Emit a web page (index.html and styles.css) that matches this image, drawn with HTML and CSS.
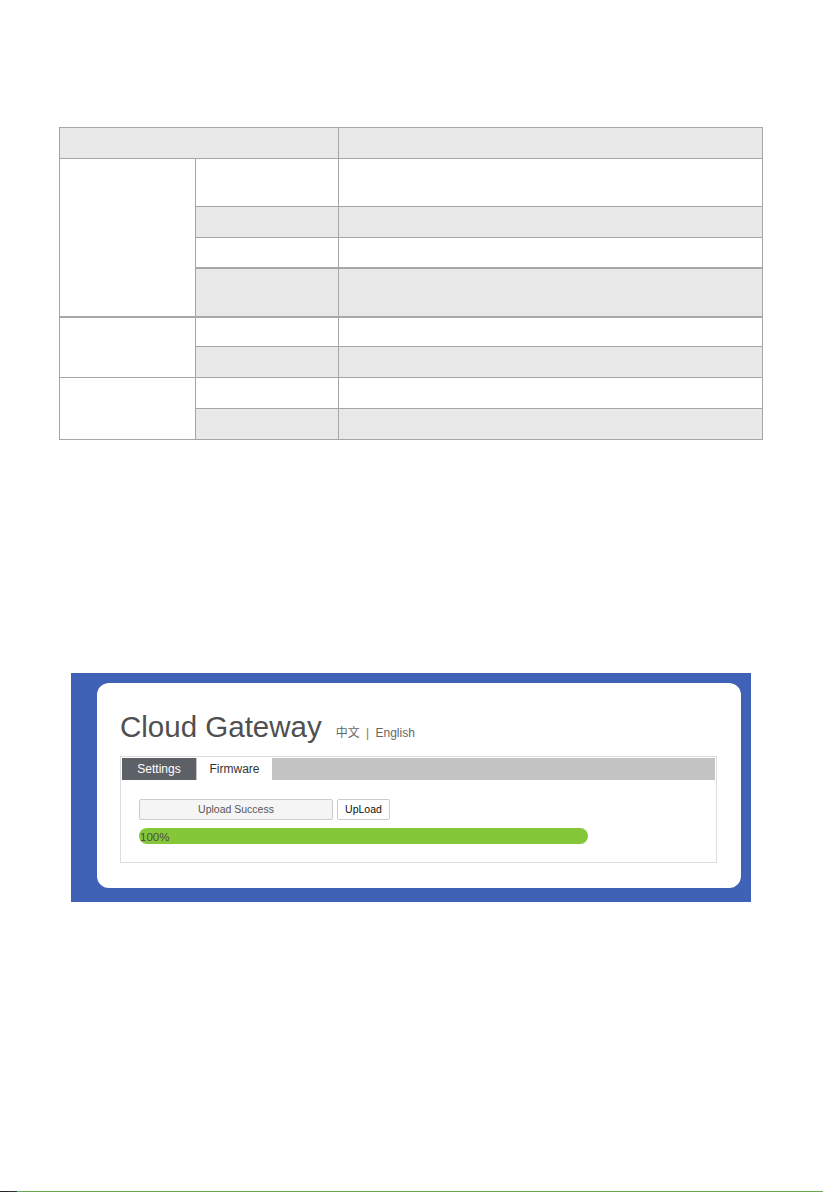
FILE: index.html
```html
<!DOCTYPE html>
<html lang="en">
<head>
    <meta charset="UTF-8">
    <meta name="viewport" content="width=device-width, initial-scale=1.0">
    <title>Cloud Gateway manual page</title>
    <link rel="stylesheet" href="styles.css">
</head>
<body>
    <div class="page">
        <!-- Parameter table (cells left blank) -->
        <table class="spec-table">
            <colgroup>
                <col class="col-group">
                <col class="col-item">
                <col class="col-desc">
            </colgroup>
            <tr class="row-head h31">
                <td colspan="2"></td>
                <td></td>
            </tr>
            <tr class="h48">
                <td class="group" rowspan="4"></td>
                <td></td>
                <td></td>
            </tr>
            <tr class="shade h31">
                <td></td>
                <td></td>
            </tr>
            <tr class="h30">
                <td></td>
                <td></td>
            </tr>
            <tr class="shade h49 thick">
                <td></td>
                <td></td>
            </tr>
            <tr class="h30 thick">
                <td class="group" rowspan="2"></td>
                <td></td>
                <td></td>
            </tr>
            <tr class="shade h31">
                <td></td>
                <td></td>
            </tr>
            <tr class="h31">
                <td class="group" rowspan="2"></td>
                <td></td>
                <td></td>
            </tr>
            <tr class="shade h31">
                <td></td>
                <td></td>
            </tr>
        </table>

        <!-- Screenshot of the gateway web UI -->
        <div class="shot">
            <div class="card">
                <div class="title-row">
                    <h1 class="title">Cloud Gateway</h1>
                    <span class="lang">中文 <span class="sep">|</span> English</span>
                </div>

                <div class="tab-box">
                    <div class="tab-bar">
                        <span class="tab tab-dark">Settings</span>
                        <span class="tab tab-active">Firmware</span>
                    </div>
                    <div class="tab-body">
                        <div class="upload-row">
                            <div class="file-field">Upload Success</div>
                            <button class="upload-btn">UpLoad</button>
                        </div>
                        <div class="progress">
                            <span class="progress-label">100%</span>
                        </div>
                    </div>
                </div>
            </div>
        </div>
    </div>
    <div class="page-edge"></div>
</body>
</html>
```

FILE: styles.css
```css
html, body {
    margin: 0;
    padding: 0;
    background: #fff;
    font-family: "Liberation Sans", Arial, "Noto Sans CJK SC", sans-serif;
    color: #333;
}
.page {
    height: 1191px;
    padding-top: 127px;
    box-sizing: border-box;
}

/* table */
.spec-table {
    margin-left: 59px;
    width: 704px;
    border-collapse: collapse;
    table-layout: fixed;
}
.col-group { width: 136px; }
.col-item { width: 143px; }
.spec-table td {
    border: 1px solid #a6a6a6;
    padding: 0;
    background: #fff;
}
.row-head td,
.shade td {
    background: #e8e8e8;
}
.spec-table td.group {
    background: #fff;
}
.thick td {
    border-top: 2px solid #a6a6a6;
}
.h30 { height: 30px; }
.h31 { height: 31px; }
.h48 { height: 48px; }
.h49 { height: 49px; }

/* screenshot frame */
.shot {
    margin: 233px 0 0 71px;
    width: 680px;
    height: 229px;
    background: #4062b6;
    padding: 10px 10px 14px 26px;
    box-sizing: border-box;
}
.card {
    height: 100%;
    background: #fff;
    border-radius: 12px;
    padding: 27px 24px 0 23px;
    box-sizing: border-box;
}
.title-row {
    display: flex;
    align-items: baseline;
    height: 34px;
    margin-bottom: 12px;
}
.title {
    margin: 0;
    font-size: 29.5px;
    font-weight: normal;
    line-height: 34px;
    color: #505050;
}
.lang {
    margin-left: 14px;
    font-size: 12px;
    color: #666;
}
.sep {
    margin: 0 3px;
    color: #9a7430;
}

.tab-box {
    border: 1px solid #ddd;
    padding: 1px;
    height: 107px;
    box-sizing: border-box;
}
.tab-bar {
    display: flex;
    height: 22px;
    background: #c3c4c3;
}
.tab {
    height: 22px;
    line-height: 22px;
    font-size: 12px;
    text-align: center;
}
.tab-dark {
    width: 74px;
    background: #5e6068;
    color: #fff;
}
.tab-active {
    width: 75px;
    margin-left: 1px;
    background: #fff;
    color: #333;
}
.tab-body {
    padding: 19px 0 0 17px;
}
.upload-row {
    display: flex;
    gap: 4px;
}
.file-field,
.upload-btn {
    height: 21px;
    line-height: 19px;
    box-sizing: border-box;
    border: 1px solid #ccc;
    border-radius: 2px;
    font-family: inherit;
    font-size: 10.5px;
    text-align: center;
}
.file-field {
    width: 194px;
    background: #f5f5f5;
    color: #555;
}
.upload-btn {
    width: 53px;
    padding: 0;
    background: #fff;
    color: #111;
}
.progress {
    margin-top: 8px;
    width: 449px;
    height: 16px;
    border-radius: 8px;
    background: #84c83a;
    line-height: 16px;
}
.progress-label {
    padding-left: 1px;
    font-size: 11.5px;
    color: #4a4a4a;
}

.page-edge {
    height: 1px;
    background: linear-gradient(to right, #222 0, #334 17px, #6aaa4f 17px);
}
```
